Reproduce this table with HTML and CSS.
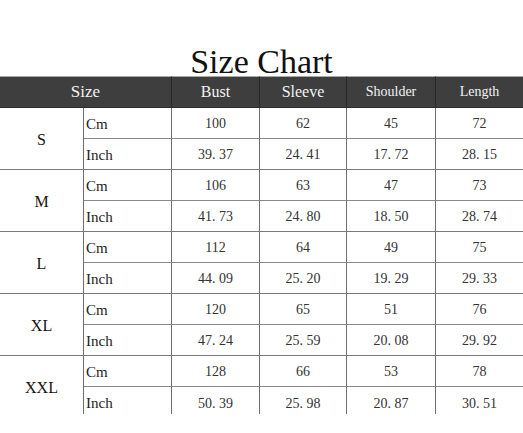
FILE: index.html
```html
<!DOCTYPE html>
<html lang="en">
<head>
<meta charset="utf-8">
<title>Size Chart</title>
<link rel="stylesheet" href="styles.css">
</head>
<body>
<div class="page">
  <h1 class="title">Size Chart</h1>
  <div class="chart">
    <div class="grid">
      <div class="hd hd-size">Size</div>
      <div class="hd hd-lg">Bust</div>
      <div class="hd hd-lg">Sleeve</div>
      <div class="hd hd-sm">Shoulder</div>
      <div class="hd hd-sm last">Length</div>

      <div class="size">S</div>
      <div class="unit">Cm</div><div class="num">100</div><div class="num">62</div><div class="num">45</div><div class="num last">72</div>
      <div class="unit grp">Inch</div><div class="num grp">39. 37</div><div class="num grp">24. 41</div><div class="num grp">17. 72</div><div class="num grp last">28. 15</div>

      <div class="size">M</div>
      <div class="unit">Cm</div><div class="num">106</div><div class="num">63</div><div class="num">47</div><div class="num last">73</div>
      <div class="unit grp">Inch</div><div class="num grp">41. 73</div><div class="num grp">24. 80</div><div class="num grp">18. 50</div><div class="num grp last">28. 74</div>

      <div class="size">L</div>
      <div class="unit">Cm</div><div class="num">112</div><div class="num">64</div><div class="num">49</div><div class="num last">75</div>
      <div class="unit grp">Inch</div><div class="num grp">44. 09</div><div class="num grp">25. 20</div><div class="num grp">19. 29</div><div class="num grp last">29. 33</div>

      <div class="size">XL</div>
      <div class="unit">Cm</div><div class="num">120</div><div class="num">65</div><div class="num">51</div><div class="num last">76</div>
      <div class="unit grp">Inch</div><div class="num grp">47. 24</div><div class="num grp">25. 59</div><div class="num grp">20. 08</div><div class="num grp last">29. 92</div>

      <div class="size end">XXL</div>
      <div class="unit">Cm</div><div class="num">128</div><div class="num">66</div><div class="num">53</div><div class="num last">78</div>
      <div class="unit end">Inch</div><div class="num end">50. 39</div><div class="num end">25. 98</div><div class="num end">20. 87</div><div class="num end last">30. 51</div>
    </div>
  </div>
</div>
</body>
</html>
```

FILE: styles.css
```css
* { box-sizing: border-box; }
html, body { margin: 0; padding: 0; background: #ffffff; }
body {
  width: 523px;
  height: 433px;
  overflow: hidden;
  font-family: "Liberation Serif", "Times New Roman", serif;
  color: #2a2a2a;
}
.page { width: 523px; }
.title {
  margin: 0;
  height: 76px;
  padding-top: 48px;
  font-size: 34px;
  line-height: 28px;
  font-weight: normal;
  text-align: center;
  color: #111;
}
.chart {
  height: 338px;
  overflow: hidden;
}
.grid {
  display: grid;
  grid-template-columns: 84px 88px 88px 87px 89px 87px;
  grid-template-rows: 32px repeat(10, 31px);
}
.hd {
  background: #3e3e3e;
  color: #f2f2f2;
  border-top: 1px solid #a8a8a8;
  border-right: 1px solid #262626;
  border-bottom: 1px solid #2e2e2e;
  display: flex;
  align-items: center;
  justify-content: center;
  padding-bottom: 1px;
}
.hd-size { grid-column: span 2; font-size: 17px; }
.hd-lg { font-size: 16px; }
.hd-sm { font-size: 14px; }
.size {
  grid-row: span 2;
  display: flex;
  align-items: center;
  justify-content: center;
  font-size: 16px;
  color: #141414;
  border-right: 1px solid #6e6e6e;
  border-bottom: 1px solid #7a7a7a;
  padding-top: 2px;
}
.unit {
  display: flex;
  align-items: center;
  padding: 2px 0 0 2px;
  font-size: 15px;
  color: #1c1c1c;
  border-right: 1px solid #6e6e6e;
  border-bottom: 1px solid #8a8a8a;
}
.num {
  display: flex;
  align-items: center;
  justify-content: center;
  padding-top: 2px;
  font-size: 14px;
  color: #333;
  border-right: 1px solid #6e6e6e;
  border-bottom: 1px solid #8a8a8a;
}
.grp { border-bottom-color: #7a7a7a; }
.end { border-bottom: none; }
.last { border-right: none; }
```
